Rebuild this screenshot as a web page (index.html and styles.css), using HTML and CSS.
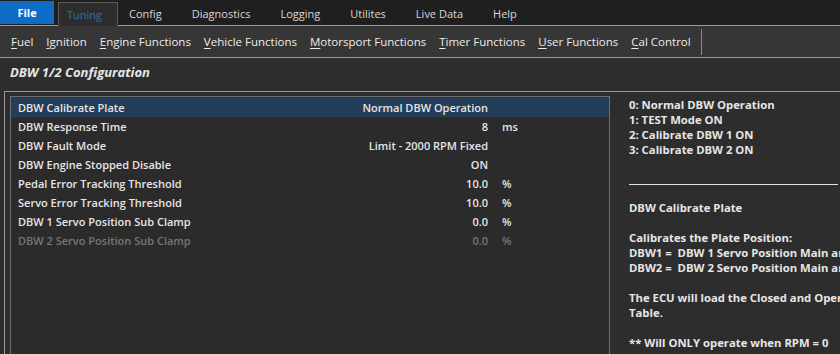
FILE: index.html
```html
<!DOCTYPE html>
<html lang="en">
<head>
  <meta charset="UTF-8"/>
  <title>DBW 1/2 Configuration</title>
  <link rel="stylesheet" href="styles.css">
</head>
<body>
  <header class="tabs">
    <a class="tab tab-file">File</a>
    <a class="tab active">Tuning</a>
    <a class="tab">Config</a>
    <a class="tab">Diagnostics</a>
    <a class="tab">Logging</a>
    <a class="tab">Utilites</a>
    <a class="tab">Live Data</a>
    <a class="tab">Help</a>
  </header>

  <nav class="menu">
    <a><u>F</u>uel</a>
    <a><u>I</u>gnition</a>
    <a><u>E</u>ngine Functions</a>
    <a><u>V</u>ehicle Functions</a>
    <a><u>M</u>otorsport Functions</a>
    <a><u>T</u>imer Functions</a>
    <a><u>U</u>ser Functions</a>
    <a><u>C</u>al Control</a>
    <span class="menu-sep"></span>
  </nav>

  <h1 class="page-title">DBW 1/2 Configuration</h1>

  <main class="frame">
    <section class="params">
      <div class="row selected"><span class="name">DBW Calibrate Plate</span><span class="value">Normal DBW Operation</span><span class="unit"></span></div>
      <div class="row"><span class="name">DBW Response Time</span><span class="value">8</span><span class="unit">ms</span></div>
      <div class="row"><span class="name">DBW Fault Mode</span><span class="value">Limit - 2000 RPM Fixed</span><span class="unit"></span></div>
      <div class="row"><span class="name">DBW Engine Stopped Disable</span><span class="value">ON</span><span class="unit"></span></div>
      <div class="row"><span class="name">Pedal Error Tracking Threshold</span><span class="value">10.0</span><span class="unit">%</span></div>
      <div class="row"><span class="name">Servo Error Tracking Threshold</span><span class="value">10.0</span><span class="unit">%</span></div>
      <div class="row"><span class="name">DBW 1 Servo Position Sub Clamp</span><span class="value">0.0</span><span class="unit">%</span></div>
      <div class="row disabled"><span class="name">DBW 2 Servo Position Sub Clamp</span><span class="value">0.0</span><span class="unit">%</span></div>
    </section>

    <aside class="help">
      <p>0: Normal DBW Operation</p>
      <p>1: TEST Mode ON</p>
      <p>2: Calibrate DBW 1 ON</p>
      <p>3: Calibrate DBW 2 ON</p>
      <p>&nbsp;</p>
      <p class="rule">&nbsp;</p>
      <p>&nbsp;</p>
      <p>DBW Calibrate Plate</p>
      <p>&nbsp;</p>
      <p>Calibrates the Plate Position:</p>
      <p>DBW1 =&nbsp; DBW 1 Servo Position Main and Sub</p>
      <p>DBW2 =&nbsp; DBW 2 Servo Position Main and Sub</p>
      <p>&nbsp;</p>
      <p>The ECU will load the Closed and Open positions into the</p>
      <p>Table.</p>
      <p>&nbsp;</p>
      <p>** Will ONLY operate when RPM = 0</p>
    </aside>
  </main>
</body>
</html>
```

FILE: styles.css
```css
:root {
  --bg: #2d2d2d;
  --bar-dark: #1f1f1f;
  --bar-mid: #363636;
  --line: #9a9a9a;
  --text: #e6e6e6;
  --muted: #767676;
  --blue: #0f6cc4;
  --select: #243d58;
}
* { box-sizing:border-box; margin:0; padding:0; }
html, body { height:100%; }
body {
  display:flex; flex-direction:column; overflow:hidden;
  background:var(--bg); color:var(--text);
  font-family:"Open Sans","Noto Sans",sans-serif; font-size:12px;
}

/* —— Tabs —— */
.tabs {
  display:flex; align-items:flex-end; height:26px;
  background:var(--bar-dark);
  border-bottom:1px solid var(--line);
}
.tab {
  display:flex; align-items:center;
  height:23px; padding:0 19px 0 11px;
  color:#d8d8d8; font-size:11px;
}
.tab-file {
  width:54px; margin-right:4px; justify-content:center; padding:0;
  background:var(--blue); color:#fff; font-weight:700;
  margin-bottom:1px;
}
.tab.active {
  width:60px; padding:0 0 0 8px;
  background:var(--bg); color:#2d6fb4;
  border:1px solid #5a5a5a; border-bottom:none;
  margin-bottom:-1px; height:24px;
}

/* —— Menu —— */
.menu {
  display:flex; align-items:center; height:32px;
  background:var(--bar-mid);
  border-bottom:1px solid var(--line);
  padding-left:11px;
}
.menu a {
  margin-right:13px; color:#ececec; font-size:11.5px;
}
.menu u { text-underline-offset:2px; }
.menu-sep {
  width:1px; height:26px; background:#8a8a8a; margin-left:-3px;
}

/* —— Title —— */
.page-title {
  font-size:13px; font-weight:700; font-style:italic;
  padding:5px 10px 0; height:33px;
}

/* —— Frame —— */
.frame {
  flex:1; display:flex;
  margin-left:4px;
  border-top:1px solid var(--line);
  border-left:1px solid var(--line);
  padding:4px 0 0 5px;
  min-height:0;
}
.params {
  width:600px; flex-shrink:0;
  background:#2b2b2b;
  border:1px solid #6e6e6e; border-bottom:none;
  font-size:11px; font-weight:600;
}
.row {
  display:flex; align-items:center; height:19px;
  padding-left:7px;
}
.row.selected { background:var(--select); height:20px; }
.row .name { width:300px; }
.row .value { width:170px; text-align:right; }
.row .unit { padding-left:14px; }
.row.disabled { color:var(--muted); }

/* —— Help text —— */
.help {
  flex:1; overflow:hidden; white-space:nowrap;
  padding:1px 0 0 19px;
  font-size:11.3px; font-weight:700; line-height:15px;
}
.help .rule { border-bottom:1px solid #e0e0e0; margin-right:2px; height:13px; }
```
